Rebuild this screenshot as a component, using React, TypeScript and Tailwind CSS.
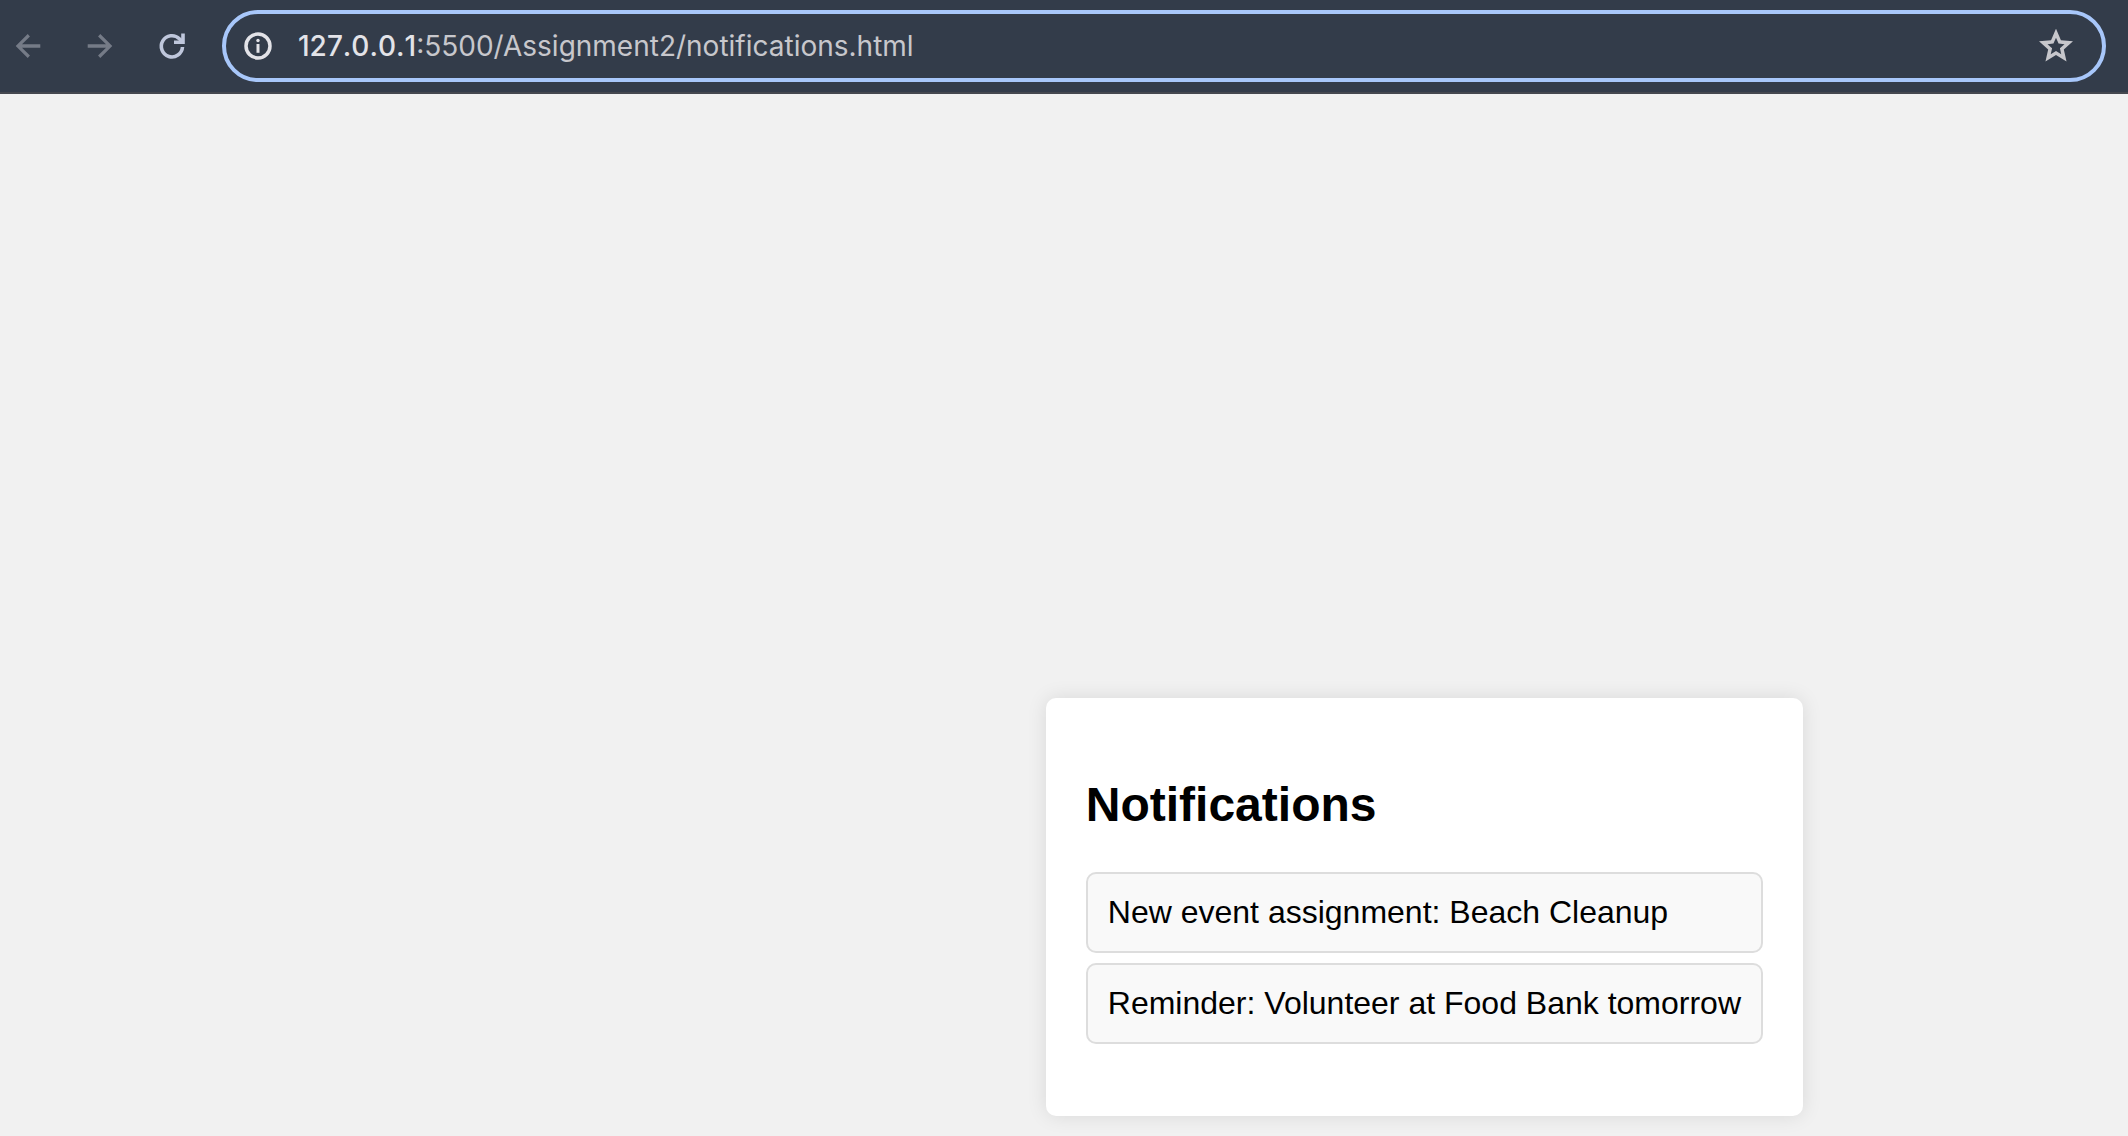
import { useState } from "react";

const notifications = [
  "New event assignment: Beach Cleanup",
  "Reminder: Volunteer at Food Bank tomorrow",
];

function BackIcon() {
  return (
    <svg viewBox="0 0 24 24" className="size-9" fill="currentColor" aria-hidden="true">
      <path d="M20.2 10.9H8l5.3-5.3L11.8 4l-8 8 8 8 1.5-1.6L8 13.1h12.2z" />
    </svg>
  );
}

function ForwardIcon() {
  return (
    <svg viewBox="0 0 24 24" className="size-9" fill="currentColor" aria-hidden="true">
      <path d="M3.8 10.9H16l-5.3-5.3L12.2 4l8 8-8 8-1.5-1.6 5.3-5.3H3.8z" />
    </svg>
  );
}

function ReloadIcon() {
  return (
    <svg viewBox="0 0 36 36" className="size-9" fill="none" stroke="currentColor" strokeWidth="3.6" aria-hidden="true">
      <path d="M28.500 19A10.600 10.600 0 1 1 25.300 10.700L28.500 13.800" />
      <path d="M20 14.200H29V5.600" />
    </svg>
  );
}

function InfoIcon() {
  return (
    <svg viewBox="0 0 28 28" className="size-7 shrink-0" fill="none" stroke="currentColor" aria-hidden="true">
      <circle cx="14" cy="14" r="12" strokeWidth="3.5" />
      <path d="M14 12V20.800" strokeWidth="3" />
      <circle cx="14" cy="8.500" r="1.700" fill="currentColor" stroke="none" />
    </svg>
  );
}

function StarIcon() {
  return (
    <svg viewBox="2 2 20 20" className="size-[34px]" fill="currentColor" fillRule="evenodd" aria-hidden="true">
      <path d="M12 1.8l2.9 6.8 7.1.6-5.4 4.8 1.6 7.1L12 17.3l-6.2 3.8L7.4 14 2 9.2l7.1-.6zM12 7.2l-1.5 3.4-3.5.3 2.7 2.4-.8 3.6 3.1-1.9 3.1 1.9-.8-3.6L17 10.9l-3.5-.3z" />
    </svg>
  );
}

function Toolbar() {
  const [path, setPath] = useState(":5500/Assignment2/notifications.html");
  return (
    <header className="flex items-center gap-8 border-b-2 border-[#45484f] bg-[#333c4a] py-[10px] pr-[22px] pl-[10px]">
      <nav className="flex gap-9 text-[#757b87]" aria-label="History">
        <button type="button" aria-label="Back">
          <BackIcon />
        </button>
        <button type="button" aria-label="Forward">
          <ForwardIcon />
        </button>
        <button type="button" aria-label="Reload" className="text-[#bfc7dc]">
          <ReloadIcon />
        </button>
      </nav>
      <div className="flex h-[72px] min-w-0 flex-1 items-center rounded-full border-4 border-[#a8c7fa] pr-[29px] pl-[18px] font-[Inter,sans-serif] text-[28px]">
        <button type="button" aria-label="View site information" className="mr-[26px] text-[#e3e3e8]">
          <InfoIcon />
        </button>
        <label htmlFor="address" className="font-medium text-[#e3e3e8] [font-kerning:none]">
          127.0.0.1
        </label>
        <input
          id="address"
          type="text"
          value={path}
          onChange={(event) => setPath(event.target.value)}
          spellCheck={false}
          className="min-w-0 flex-1 bg-transparent text-[#c7c7cc] outline-none"
        />
        <button type="button" aria-label="Bookmark this page" className="text-[#c7c7cc]">
          <StarIcon />
        </button>
      </div>
    </header>
  );
}

export default function App() {
  return (
    <div className="flex min-h-screen flex-col bg-[#f1f1f1] font-['Liberation_Sans',Arial,sans-serif] text-black">
      <Toolbar />
      <main className="flex flex-1 items-end justify-end pr-[325px] pb-5">
        <section className="rounded-[10px] bg-white p-10 shadow-[0_0_20px_rgba(0,0,0,0.1)]">
          <h2 className="my-10 text-[48px] leading-[54px] font-bold">Notifications</h2>
          <ul className="mb-8 flex flex-col gap-[10px]">
            {notifications.map((text) => (
              <li
                key={text}
                className="rounded-[10px] border-2 border-[#dddddd] bg-[#f9f9f9] p-5 text-[32px] leading-[37px]"
              >
                {text}
              </li>
            ))}
          </ul>
        </section>
      </main>
    </div>
  );
}
